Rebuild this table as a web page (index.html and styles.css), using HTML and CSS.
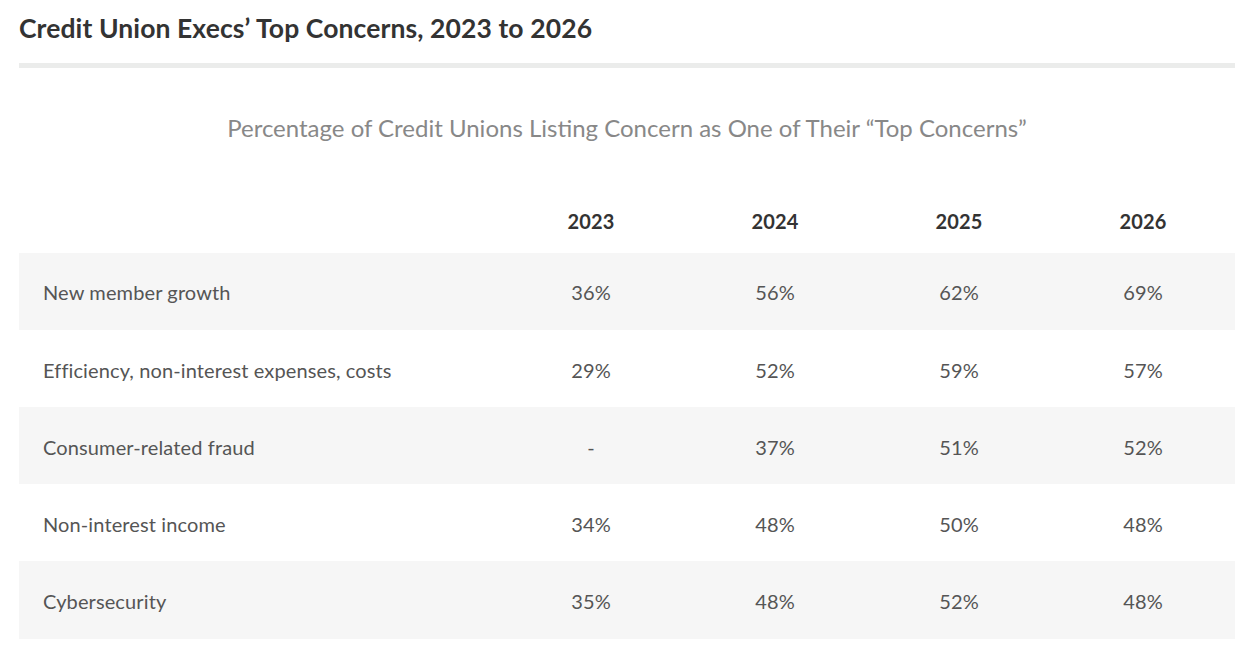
FILE: index.html
```html
<!DOCTYPE html>
<html lang="en">
<head>
<meta charset="utf-8">
<title>Credit Union Execs’ Top Concerns, 2023 to 2026</title>
<link rel="stylesheet" href="styles.css">
</head>
<body>
<div class="page">
  <h1 class="title">Credit Union Execs’ Top Concerns, 2023 to 2026</h1>
  <div class="divider"></div>
  <p class="subtitle">Percentage of Credit Unions Listing Concern as One of Their “Top Concerns”</p>
  <table class="data">
    <colgroup>
      <col class="col-label">
      <col class="col-year">
      <col class="col-year">
      <col class="col-year">
      <col class="col-year">
    </colgroup>
    <thead>
      <tr>
        <th class="label"></th>
        <th>2023</th>
        <th>2024</th>
        <th>2025</th>
        <th>2026</th>
      </tr>
    </thead>
    <tbody>
      <tr class="shade">
        <td class="label">New member growth</td>
        <td>36%</td><td>56%</td><td>62%</td><td>69%</td>
      </tr>
      <tr>
        <td class="label">Efficiency, non-interest expenses, costs</td>
        <td>29%</td><td>52%</td><td>59%</td><td>57%</td>
      </tr>
      <tr class="shade">
        <td class="label">Consumer-related fraud</td>
        <td>-</td><td>37%</td><td>51%</td><td>52%</td>
      </tr>
      <tr>
        <td class="label">Non-interest income</td>
        <td>34%</td><td>48%</td><td>50%</td><td>48%</td>
      </tr>
      <tr class="shade">
        <td class="label">Cybersecurity</td>
        <td>35%</td><td>48%</td><td>52%</td><td>48%</td>
      </tr>
    </tbody>
  </table>
</div>
</body>
</html>
```

FILE: styles.css
```css
html, body {
  margin: 0;
  padding: 0;
  background: #ffffff;
}

body {
  font-family: Lato, "Open Sans", "Liberation Sans", sans-serif;
  color: #555555;
}

.page {
  width: 1216px;
  margin-left: 19px;
  padding-top: 12px;
}

.title {
  margin: 0;
  font-size: 26.5px;
  line-height: 32px;
  font-weight: 700;
  color: #333333;
  letter-spacing: 0.1px;
}

.divider {
  margin-top: 19px;
  height: 5px;
  background: #ebeceb;
}

.subtitle {
  margin: 45px 0 0;
  font-size: 24px;
  line-height: 29px;
  font-weight: 400;
  color: #888888;
  text-align: center;
}

.data {
  margin-top: 67px;
  width: 1216px;
  border-collapse: collapse;
  table-layout: fixed;
}

.col-label {
  width: 480px;
}

.col-year {
  width: 184px;
}

.data th,
.data td {
  box-sizing: border-box;
  padding: 0;
  font-size: 20px;
  line-height: 24px;
  letter-spacing: 0.12px;
  text-align: center;
}

.data th {
  font-weight: 700;
  color: #333333;
  padding-bottom: 19.7px;
}

.data td {
  padding-top: 27.8px;
  padding-bottom: 25.4px;
  color: #555555;
}

.data .label {
  text-align: left;
  padding-left: 24px;
}

.data tr.shade td {
  background: #f6f6f6;
}
```
